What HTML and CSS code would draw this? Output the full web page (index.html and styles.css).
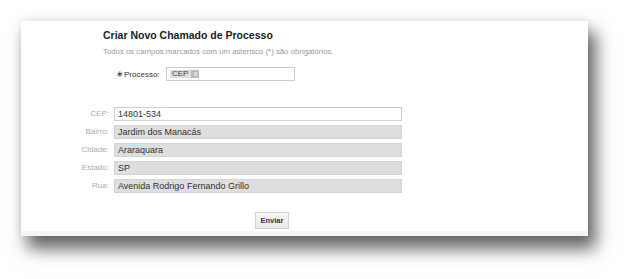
FILE: index.html
```html
<!DOCTYPE html>
<html lang="pt-br">
<head>
    <meta charset="UTF-8">
    <title>Criar Novo Chamado de Processo</title>
    <link rel="stylesheet" href="styles.css">
</head>
<body>
    <div class="janela">
        <h1 class="titulo">Criar Novo Chamado de Processo</h1>
        <p class="aviso">Todos os campos marcados com um asterisco (*) são obrigatórios.</p>

        <div class="processo">
            <span class="obrigatorio">&#8727;</span>
            <label>Processo:</label>
            <div class="seletor">
                <span class="tag">CEP <span class="tag-x">x</span></span>
            </div>
        </div>

        <div class="campos">
            <label>CEP:</label>
            <div class="campo">14801-534</div>
            <label>Bairro:</label>
            <div class="campo bloqueado">Jardim dos Manacás</div>
            <label>Cidade:</label>
            <div class="campo bloqueado">Araraquara</div>
            <label>Estado:</label>
            <div class="campo bloqueado">SP</div>
            <label>Rua:</label>
            <div class="campo bloqueado">Avenida Rodrigo Fernando Grillo</div>
        </div>

        <div class="acoes">
            <button class="btn">Enviar</button>
        </div>
    </div>
</body>
</html>
```

FILE: styles.css
```css
body { margin: 0; padding: 21px 0 0 21px; min-height: 279px; box-sizing: border-box; background: #fff; font-family: "Liberation Sans", Arial, sans-serif; }
.janela { width: 567px; height: 203px; padding-top: 7px; background: #fff; border-bottom: 5px solid #f4f4f4; box-shadow: 0 -2px 8px rgba(0,0,0,.07), 7px 12px 16px 1px rgba(0,0,0,.6); }
.titulo { margin: 0 0 0 82px; font-size: 10.5px; line-height: 14px; color: #222; }
.aviso { margin: 5px 0 0 82px; font-size: 7.8px; line-height: 10px; color: #999; }
.processo { display: flex; align-items: center; margin: 10px 0 0 95px; height: 14px; font-size: 8px; color: #333; }
.obrigatorio { width: 8px; font-size: 9px; }
.processo label { width: 42px; }
.seletor { box-sizing: border-box; width: 129px; height: 14px; border: 1px solid #ccc; background: #fff; display: flex; align-items: center; padding-left: 3px; }
.tag { display: inline-flex; align-items: center; height: 8px; background: #ddd; padding-left: 2px; font-size: 8px; line-height: 8px; color: #444; font-weight: normal; }
.tag-x { display: inline-block; margin-left: 3px; width: 8px; height: 8px; background: #bbb; color: #fff; font-size: 7px; line-height: 8px; text-align: center; }
.campos { display: grid; grid-template-columns: 49px 288px; column-gap: 5px; row-gap: 4px; margin: 26px 0 0 39px; }
.campos label { font-size: 8px; line-height: 14px; color: #aaa; text-align: right; }
.campo { height: 12px; border: 1px solid #ccc; background: #fff; font-size: 9px; line-height: 12px; color: #333; padding-left: 3px; }
.bloqueado { background: #dedede; border-color: #d4d4d4; }
.acoes { margin-top: 16px; padding-left: 234px; }
.btn { height: 17px; width: 34px; padding: 0; font-family: inherit; font-size: 7.5px; font-weight: bold; color: #333; border: 1px solid #d0d0d0; background: linear-gradient(#f8f8f8, #e8e8e8); cursor: pointer; }
```
